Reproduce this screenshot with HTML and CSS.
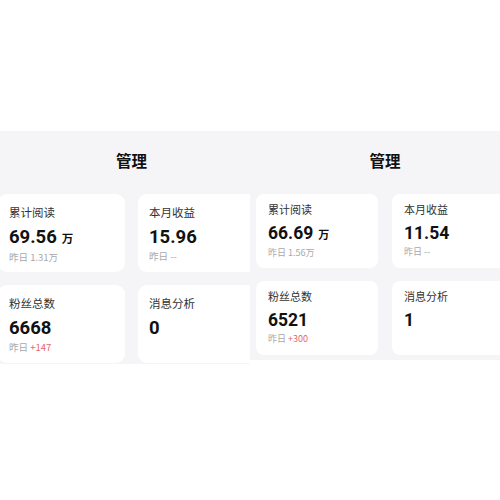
FILE: index.html
```html
<!DOCTYPE html>
<html>
  <head>
    <meta name="viewport" content="width=device-width, initial-scale=1.0">
    <title>管理</title>
    <link rel="stylesheet" href="styles.css">
  </head>
  <body>
    <div class="shots">
      <div class="panel panel-left">
        <div class="panel-inner">
          <h1 class="panel-title">管理</h1>
          <div class="card-grid">
            <div class="stat-card">
              <p class="stat-label">累计阅读</p>
              <p class="stat-value">69.56<span class="stat-unit">万</span></p>
              <p class="stat-sub">昨日 1.31万</p>
            </div>
            <div class="stat-card">
              <p class="stat-label">本月收益</p>
              <p class="stat-value">15.96</p>
              <p class="stat-sub">昨日 --</p>
            </div>
            <div class="stat-card">
              <p class="stat-label">粉丝总数</p>
              <p class="stat-value">6668</p>
              <p class="stat-sub">昨日 <span class="stat-up">+147</span></p>
            </div>
            <div class="stat-card">
              <p class="stat-label">消息分析</p>
              <p class="stat-value">0</p>
            </div>
          </div>
        </div>
      </div>
      <div class="panel panel-right">
        <div class="panel-inner">
          <h1 class="panel-title">管理</h1>
          <div class="card-grid">
            <div class="stat-card">
              <p class="stat-label">累计阅读</p>
              <p class="stat-value">66.69<span class="stat-unit">万</span></p>
              <p class="stat-sub">昨日 1.56万</p>
            </div>
            <div class="stat-card">
              <p class="stat-label">本月收益</p>
              <p class="stat-value">11.54</p>
              <p class="stat-sub">昨日 --</p>
            </div>
            <div class="stat-card">
              <p class="stat-label">粉丝总数</p>
              <p class="stat-value">6521</p>
              <p class="stat-sub">昨日 <span class="stat-up">+300</span></p>
            </div>
            <div class="stat-card">
              <p class="stat-label">消息分析</p>
              <p class="stat-value">1</p>
            </div>
          </div>
        </div>
      </div>
    </div>
  </body>
</html>
```

FILE: styles.css
```css
body {
  margin: 0;
  background-color: #fff;
  font-family: "Noto Sans CJK SC", sans-serif;
  color: #222;
}

.shots {
  display: flex;
  align-items: flex-start;
  padding-top: 131px;
}

.panel {
  width: 250px;
  overflow: hidden;
  background-color: #f5f5f7;
}

.panel-inner {
  display: flex;
  flex-direction: column;
  align-items: center;
}

.panel-title {
  margin: 0;
  font-size: 15.5px;
  line-height: 20px;
  font-weight: 700;
  color: #111;
}

.card-grid {
  display: grid;
}

.stat-card {
  background-color: #fff;
  box-sizing: border-box;
}

.stat-card p {
  margin: 0;
  white-space: nowrap;
}

.stat-label {
  color: #333;
}

.stat-value {
  font-family: Roboto, "Noto Sans CJK SC", sans-serif;
  font-weight: 700;
  color: #111;
}

.stat-unit {
  font-family: "Noto Sans CJK SC", sans-serif;
  font-weight: 700;
  margin-left: 5px;
}

.stat-sub {
  color: #a8a8a8;
}

.stat-up {
  color: #e06a6a;
}

/* left shot, a little larger */
.panel-left {
  height: 233px;
}

.panel-left .panel-inner {
  width: 267px;
  margin-left: -2px;
  padding-top: 19px;
}

.panel-left .card-grid {
  margin-top: 24px;
  grid-template-columns: 127px 127px;
  gap: 13px;
}

.panel-left .stat-card {
  height: 78px;
  padding: 10px 11px 0;
  border-radius: 9px;
}

.panel-left .stat-label {
  font-size: 11.5px;
  line-height: 16px;
}

.panel-left .stat-value {
  margin-top: 5px;
  font-size: 18.5px;
  line-height: 24px;
}

.panel-left .stat-unit {
  font-size: 11.5px;
}

.panel-left .stat-sub {
  font-size: 9.5px;
  line-height: 14px;
}

/* right shot */
.panel-right {
  height: 229px;
}

.panel-right .panel-inner {
  width: 258px;
  margin-left: 6px;
  padding-top: 19px;
}

.panel-right .card-grid {
  margin-top: 24px;
  grid-template-columns: 122px 122px;
  gap: 13px 14px;
}

.panel-right .stat-card {
  height: 74px;
  padding: 8px 12px 0;
  border-radius: 8px;
}

.panel-right .stat-label {
  font-size: 11px;
  line-height: 15px;
}

.panel-right .stat-value {
  margin-top: 5px;
  font-size: 17.5px;
  line-height: 23px;
}

.panel-right .stat-unit {
  font-size: 11px;
}

.panel-right .stat-sub {
  font-size: 9px;
  line-height: 14px;
}
```
